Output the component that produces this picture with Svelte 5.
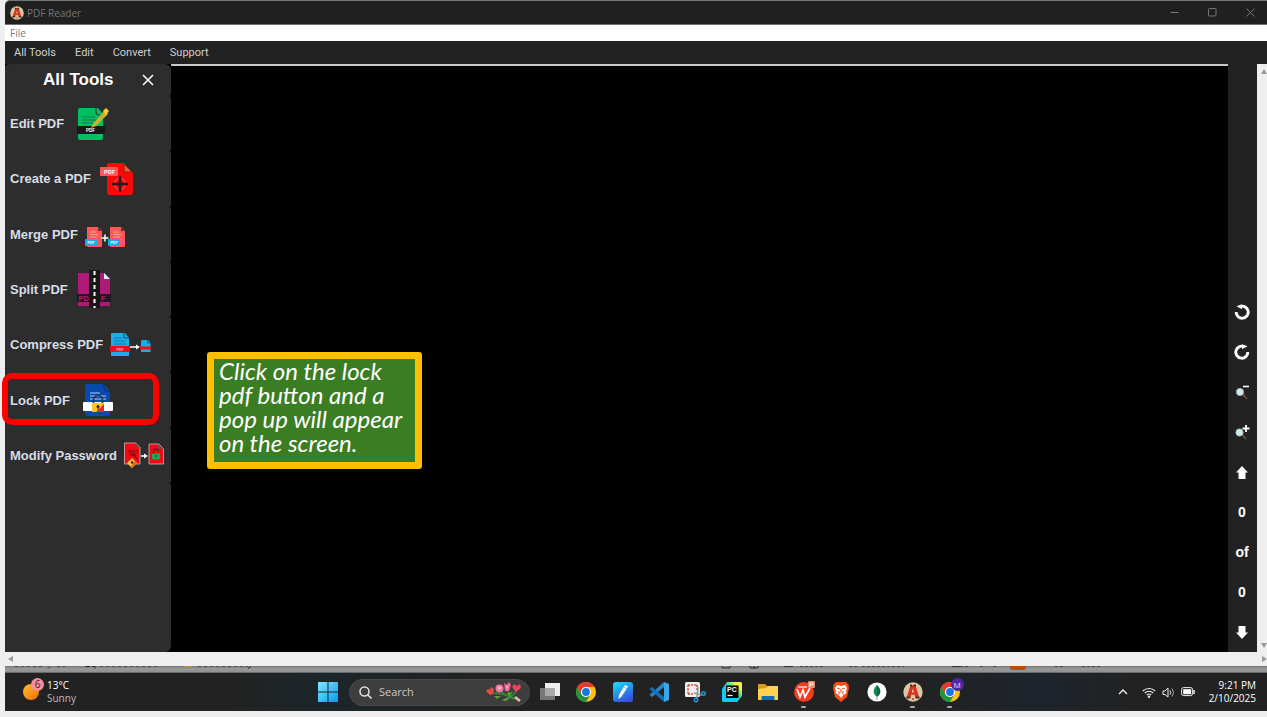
<script lang="ts">
  const menus = ['All Tools', 'Edit', 'Convert', 'Support'];
  const tools = [
    { id: 'edit', label: 'Edit PDF' },
    { id: 'create', label: 'Create a PDF' },
    { id: 'merge', label: 'Merge PDF' },
    { id: 'split', label: 'Split PDF' },
    { id: 'compress', label: 'Compress PDF' },
    { id: 'lock', label: 'Lock PDF' },
    { id: 'password', label: 'Modify Password' }
  ];
  const apps = [
    { id: 'tasks', name: 'Task view' },
    { id: 'chrome', name: 'Chrome' },
    { id: 'pen', name: 'Journal' },
    { id: 'code', name: 'Code editor' },
    { id: 'snip', name: 'Snipping Tool' },
    { id: 'pycharm', name: 'PyCharm' },
    { id: 'files', name: 'File Explorer' },
    { id: 'wps', name: 'WPS Office', running: true },
    { id: 'brave', name: 'Brave' },
    { id: 'leaf', name: 'Compass' },
    { id: 'reader', name: 'PDF Reader', running: true },
    { id: 'profile', name: 'Chrome profile', running: true }
  ];
</script>

{#snippet logo(size: number)}
  <svg width={size} height={size} viewBox="0 0 20 20" aria-hidden="true">
    <circle cx="10" cy="10" r="9.7" fill="#d9c7a5" />
    <path d="M7.7 3h4.6l4 12.8h-4l-.8-3H8.3l-.8 3h-4z" fill="#d9331c" />
    <path d="M9.9 6.4 8.7 10.6h2.4z" fill="#e3c9a0" />
    <path d="M7 2.5h2v2H7zM11 2.5h2v2h-2zM3.2 14.8h4v1.6h-4zM12.6 14.8h4v1.6h-4z" fill="#3b2f2f" />
    <circle cx="10" cy="17" r="1" fill="#d9331c" />
  </svg>
{/snippet}

{#snippet chrome()}
  <circle cx="10" cy="10" r="10" fill="#fbc116" />
  <path d="M1.34 5A10 10 0 0 1 18.66 5H10a5 5 0 0 0-4.33 7.5z" fill="#e33b2e" />
  <path d="M1.34 5A10 10 0 0 0 10 20l4.33-7.5a5 5 0 0 1-8.66 0z" fill="#229342" />
  <circle cx="10" cy="10" r="5" fill="#fff" />
  <circle cx="10" cy="10" r="3.9" fill="#1a73e8" />
{/snippet}

{#snippet toolIcon(id: string)}
  {#if id === 'edit'}
    <svg class="i-edit" width="34" height="34" viewBox="0 0 34 34" aria-hidden="true">
      <path d="M3 1h18l5 6v24a2 2 0 0 1-2 2H3a2 2 0 0 1-2-2V3a2 2 0 0 1 2-2z" fill="#04bf62" />
      <path d="M19 1v4a3 3 0 0 0 3 3h4" fill="none" stroke="#1c5035" stroke-width="1.2" />
      <path d="M5 10h13M5 13h15M5 16h11" stroke="#12794a" stroke-width="1" />
      <path d="M0 19h28v8H0z" fill="#191919" />
      <path d="m16 17 11-13 4 3-12 12-5 2z" fill="#c7b42c" />
      <path d="m26 4 3-3 3 3-3 4z" fill="#ffd326" />
      <text x="9" y="25" class="tiny" fill="#fff" font-size="4.5">PDF</text>
    </svg>
  {:else if id === 'create'}
    <svg class="i-create" width="34" height="34" viewBox="0 0 34 34" aria-hidden="true">
      <path d="M9 1h15l9 10v20a2 2 0 0 1-2 2H9a2 2 0 0 1-2-2V3a2 2 0 0 1 2-2z" fill="#fb0808" />
      <path d="M24 2v8h8z" fill="#ee5a31" stroke="#6b2414" stroke-width=".8" />
      <rect x="0" y="5" width="18" height="9" rx="1" fill="#ff5757" />
      <text x="4" y="12" class="tiny" fill="#fff" font-size="5.5">PDF</text>
      <circle cx="20" cy="22" r="5.5" fill="none" stroke="#ff5757" stroke-width="1" />
      <path d="M20 15v14M13 22h14" stroke="#24191a" stroke-width="2.6" stroke-linecap="round" />
    </svg>
  {:else if id === 'merge'}
    <svg class="i-merge" width="42" height="22" viewBox="0 0 42 22" aria-hidden="true">
      {#each [0, 23] as x}
        <g transform="translate({x} 0)">
          <path d="M2 1h11l4 4v15a1 1 0 0 1-1 1H3a1 1 0 0 1-1-1z" fill="#ff5757" />
          <path d="M13 1v4h4z" fill="#633" />
          <path d="M5 6h6M5 8.500h8M5 11h7" stroke="#ff9c96" stroke-width="1" />
          <rect x="0" y="13" width="12" height="7" rx="1" fill="#1cabe2" />
          <text x="2.500" y="18" class="tiny" fill="#fff" font-size="3.5">PDF</text>
        </g>
      {/each}
      <path d="M20 8.500v7M16.500 12h7" stroke="#fff" stroke-width="1.500" />
    </svg>
  {:else if id === 'split'}
    <svg class="i-split" width="34" height="38" viewBox="0 0 34 38" aria-hidden="true">
      <path d="M1 3h27l5 6v27H1z" fill="#ad1a78" />
      <path d="M27 3v6h6z" fill="#d9edf5" />
      <path d="M0 24h34v8H0z" fill="#201a1f" />
      <path d="M12 0h11v38H12z" fill="#171717" />
      <path d="M17.500 1v37" stroke="#fff" stroke-width="2" stroke-dasharray="4 3" />
      <text x="1.500" y="31" class="thin" fill="#ad1a78" font-size="7.500">PD</text>
      <text x="24" y="31" class="thin" fill="#ad1a78" font-size="7.500">F</text>
    </svg>
  {:else if id === 'compress'}
    <svg class="i-compress" width="42" height="24" viewBox="0 0 42 24" aria-hidden="true">
      <path d="M2 0h13l4 5v18H2a1 1 0 0 1-1-1V1a1 1 0 0 1 1-1z" fill="#1cace6" />
      <path d="M14 0v5h5" fill="none" stroke="#174e69" />
      <path d="M4 5h8M4 8h12M4 11h12" stroke="#0a6fa0" stroke-width=".8" />
      <rect x="0" y="13" width="20" height="6" rx="1" fill="#ef0e13" />
      <text x="6.500" y="17.500" class="tiny" fill="#fbb" font-size="3.5">PDF</text>
      <path d="M20 14h7" stroke="#fff" stroke-width="1.500" />
      <path d="m26 11.500 4 2.500-4 2.500z" fill="#fff" />
      <path d="M32 7h6l2.500 3v9H31V8z" fill="#1cace6" />
      <path d="M37.500 7v3h3" stroke="#174e69" fill="none" stroke-width=".8" />
      <path d="M30 13.500h11v3H30z" fill="#ef0e13" />
    </svg>
  {:else if id === 'lock'}
    <svg class="i-lock" width="30" height="34" viewBox="0 0 30 34" aria-hidden="true">
      <path d="M4 1h17l6 7v23a2 2 0 0 1-2 2H4a2 2 0 0 1-2-2V3a2 2 0 0 1 2-2z" fill="#0749ac" />
      <path d="M21 1v4a3 3 0 0 0 3 3h3" fill="none" stroke="#12284d" />
      <path d="M7 10h10M7 13h16M7 16h16" stroke="#b3cdf6" stroke-width="1" />
      <rect y="19" width="30" height="9" rx="1" fill="#fff" />
      <path d="M10.500 20v-3a4.500 4.500 0 0 1 9 0v3" fill="none" stroke="#28313f" stroke-width="1.600" />
      <rect x="9" y="20" width="12" height="9" fill="#fdc52b" />
      <path d="M21 21v8h-8z" fill="#e22c20" />
      <circle cx="15" cy="23.500" r="1.500" fill="#3b2a18" />
      <path d="M14.500 24h1v3h-1z" fill="#3b2a18" />
    </svg>
  {:else}
    <svg class="i-password" width="40" height="26" viewBox="0 0 40 26" aria-hidden="true">
      <path d="M.5 1H12l4 4v17H.5z" fill="#f50713" stroke="#c6b9b9" stroke-width=".8" />
      <path d="M12 1v4h4z" fill="#7b4547" />
      <text x="4" y="12" class="tiny" fill="#811" font-size="5">PDF</text>
      <path d="M5 13h7M9 12l4 5" stroke="#611" stroke-width="1.200" />
      <path d="m8 16 5 5-5 5-5-5z" fill="#ffc530" />
      <path d="m10.500 18.500 2.500 2.500-5 5-1-1z" fill="#ee661f" />
      <circle cx="8" cy="20.500" r="1.200" fill="#322" />
      <path d="M17 14h4" stroke="#fff" stroke-width="1.500" />
      <path d="m20 11.500 4 2.500-4 2.500z" fill="#fff" />
      <path d="M25 2h10l4.500 5v15H25z" fill="#f50713" stroke="#c6b9b9" stroke-width=".8" />
      <path d="M34 2v5h5z" fill="#7b4547" />
      <path d="M29.500 12V9.500a2.500 2.500 0 0 1 5 0" fill="none" stroke="#35331d" stroke-width="1.200" />
      <rect x="28" y="11.500" width="8" height="6" rx="1" fill="#0fb255" />
      <circle cx="32" cy="14" r="1" fill="#174f2d" />
    </svg>
  {/if}
{/snippet}

{#snippet appIcon(id: string)}
  <svg class="glyph" width="22" height="22" viewBox="-1 -1 22 22" aria-hidden="true">
    {#if id === 'tasks'}
      <path d="M5 1h15v13H5z" fill="#ededed" />
      <path d="M0 6h15v12H0z" fill="#777" />
      <path d="M5 6h10v8H5z" fill="#aaa" />
    {:else if id === 'chrome'}
      {@render chrome()}
    {:else if id === 'pen'}
      <defs><linearGradient id="pen-bg" x1="0" y1="0" x2=".5" y2="1"><stop stop-color="#16e4fa" /><stop offset="1" stop-color="#3454dd" /></linearGradient></defs>
      <rect width="20" height="20" rx="3" fill="url(#pen-bg)" />
      <path d="m12 3 3 1.500-6.500 10L5.500 17l.3-4z" fill="#fff" />
      <path d="m11 5 3 2" stroke="#39a5ec" stroke-width=".7" />
    {:else if id === 'code'}
      <path d="M15 0v5L3 15l-2.500-2L15 0z" fill="#2489ca" />
      <path d="M15 20v-5L3 5 .5 7 15 20z" fill="#1070b3" />
      <path d="m15 0 5 2v16l-5 2z" fill="#3ba7eb" />
    {:else if id === 'snip'}
      <rect x="0" y="0" width="15" height="15" rx="1.500" fill="#eee" />
      <path d="M3 3h9M3 3v9M12 3v5M3 12h5" stroke="#d44a35" stroke-width="1.500" stroke-dasharray="2 1.200" fill="none" />
      <path d="m13 5-1 11M9 11l8 2" stroke="#8b9aa5" stroke-width="1.700" />
      <circle cx="11" cy="18" r="1.800" fill="none" stroke="#2497d3" stroke-width="1.400" />
      <circle cx="18.500" cy="11.500" r="1.800" fill="none" stroke="#2497d3" stroke-width="1.400" />
    {:else if id === 'pycharm'}
      <defs><linearGradient id="py-bg" x1="0" y1="1" x2="1" y2="0"><stop offset=".45" stop-color="#12cdf0" /><stop offset=".6" stop-color="#3ddc9a" /><stop offset=".8" stop-color="#f2f046" /></linearGradient></defs>
      <path d="M5 0h14l1 1v13l-5 6H1l-1-1V7z" fill="url(#py-bg)" />
      <path d="M4 3.500h12.500V16H4z" fill="#080808" />
      <text x="5" y="10" class="tiny" fill="#fff" font-size="7">PC</text>
      <path d="M5.500 13.500h5" stroke="#fff" stroke-width="1.200" />
    {:else if id === 'files'}
      <path d="M0 2h7l2 2h11v14H0z" fill="#d69b18" />
      <path d="M0 7 8 6l2-2h10v14H0z" fill="#ffd250" />
      <path d="M3.500 18v-3a1 1 0 0 1 1-1h11a1 1 0 0 1 1 1v3z" fill="#0b70b8" />
    {:else if id === 'wps'}
      <circle cx="10" cy="10" r="10" fill="#f53b24" />
      <path d="m3 7 3 8 3-7 2 7 5-9" fill="none" stroke="#fff" stroke-width="1.700" />
      <path d="M4 5h9" stroke="#fff" stroke-width="1.200" />
      <rect x="14" y="-1" width="7" height="7" rx="1" fill="#e78b70" />
      <path d="M16 5V1h3v2h-3" stroke="#fff" fill="none" stroke-width=".8" />
    {:else if id === 'brave'}
      <path d="m5 0-3 3 .5 1L2 6l2 9 6 5 6-5 2-9-.5-2 .5-1-3-3z" fill="#fa4b19" />
      <path d="m6 3 4 1 4-1 2 3-1 3 .500 2-3 2-2.500 3-2.500-3-3-2L5 9 4 6z" fill="#fff" />
      <path d="m6 6 3 1M14 6l-3 1M10 7v4M7.500 9l1 2-1 1.500M12.500 9l-1 2 1 1.500" stroke="#fa4b19" stroke-width="1" fill="none" />
    {:else if id === 'leaf'}
      <circle cx="10" cy="10" r="9.600" fill="#fff" />
      <path d="M10 3c-5 5-4 9 0 12z" fill="#168a51" />
      <path d="M10 3c5 5 4 9 0 12z" fill="#116348" />
      <path d="M10 14v4" stroke="#8d9f92" stroke-width="1" />
    {:else if id === 'reader'}
      {@render logo(20)}
    {:else}
      {@render chrome()}
    {/if}
  </svg>
  {#if id === 'profile'}<span class="badge m">M</span>{/if}
{/snippet}

<div class="screen">
  <header class="titlebar">
    {@render logo(14)}
    <span class="title">PDF Reader</span>
    <div class="window-buttons">
      <button aria-label="Minimize"><svg width="9" height="9" viewBox="0 0 9 9"><path d="M.5 4.500h8" /></svg></button>
      <button aria-label="Maximize"><svg width="9" height="9" viewBox="0 0 9 9"><rect x=".5" y=".5" width="7.500" height="7.500" rx="1" /></svg></button>
      <button aria-label="Close"><svg width="9" height="9" viewBox="0 0 9 9"><path d="m.5.5 8 8m0-8-8 8" /></svg></button>
    </div>
  </header>

  <div class="filebar"><button>File</button></div>

  <nav class="toolbar">
    {#each menus as menu}<button>{menu}</button>{/each}
  </nav>

  <main>
    <aside class="sidebar">
      <div class="side-head">
        <h1>All Tools</h1>
        <button aria-label="Close tools"><svg width="12" height="12" viewBox="0 0 12 12"><path d="m1 1 10 10M11 1 1 11" stroke="#fff" stroke-width="1.500" /></svg></button>
      </div>
      <div class="tools">
        {#each tools as tool}
          <button class="tool {tool.id}">
            <span>{tool.label}</span>
            {@render toolIcon(tool.id)}
          </button>
        {/each}
      </div>
      <div class="side-rest"></div>
    </aside>

    <section class="canvas">
      <p class="note">Click on the lock<br />pdf button and a<br />pop up will appear<br />on the screen.</p>
    </section>

    <aside class="pager">
      <button aria-label="Rotate left"><svg width="16" height="16" viewBox="0 0 16 16"><path d="M6 2.600A6 6 0 1 1 2.200 8" fill="none" stroke="#fff" stroke-width="2.900" /><path d="M2.500 2.200 8 .300v5z" fill="#fff" /></svg></button>
      <button aria-label="Rotate right"><svg width="16" height="16" viewBox="0 0 16 16"><path d="M10 2.600A6 6 0 1 0 13.800 8" fill="none" stroke="#fff" stroke-width="2.900" /><path d="M13.500 2.200 8 .300v5z" fill="#fff" /></svg></button>
      <button aria-label="Zoom out"><svg width="16" height="16" viewBox="0 0 16 16"><path d="m8 9 5 6" stroke="#76503d" stroke-width="1.500" /><circle cx="6" cy="8" r="3.700" fill="#d3e8e6" stroke="#8fa3a2" stroke-width=".6" /><path d="M9 2.500h6" stroke="#fff" stroke-width="1.600" /></svg></button>
      <button aria-label="Zoom in"><svg width="16" height="16" viewBox="0 0 16 16"><path d="m7 9 5 6" stroke="#76503d" stroke-width="1.500" /><circle cx="5.500" cy="8.500" r="3.700" fill="#d3e8e6" stroke="#8fa3a2" stroke-width=".6" /><path d="M8.500 4.500h7M12 1v7" stroke="#fff" stroke-width="1.800" /></svg></button>
      <button aria-label="Previous page"><svg width="12" height="13" viewBox="0 0 12 13"><path d="m6 0 6 6.500H9.500V13h-7V6.500H0z" fill="#fff" /></svg></button>
      <span>0</span>
      <span>of</span>
      <span>0</span>
      <button aria-label="Next page"><svg width="12" height="13" viewBox="0 0 12 13"><path d="m6 13 6-6.500H9.500V0h-7v6.500H0z" fill="#fff" /></svg></button>
    </aside>

    <div class="vscroll">
      <svg width="6" height="5" viewBox="0 0 6 5"><path d="m3 0 3 5H0z" /></svg>
      <svg width="6" height="5" viewBox="0 0 6 5"><path d="m3 5 3-5H0z" /></svg>
    </div>
  </main>

  <div class="hscroll">
    <svg width="5" height="6" viewBox="0 0 5 6"><path d="m0 3 5-3v6z" /></svg>
    <svg width="5" height="6" viewBox="0 0 5 6"><path d="m5 3-5-3v6z" /></svg>
  </div>

  <div class="behind">
    <svg width="250" height="3" viewBox="0 0 250 3" aria-hidden="true">
      <path d="M10 .5h30M52 .5h8M95 .5h58M193 .5h50" stroke="#4b4b4b" stroke-dasharray="3 3" />
      <path d="M80 .5h5m2 0h3v2m-45-2-2 2m203-2-3 2" stroke="#282828" fill="none" /><path d="M179 .5h8" stroke="#c48b35" />
    </svg>
    <svg width="550" height="4" viewBox="0 0 550 4" aria-hidden="true">
      <path d="M5 0v2h8V0M33 0v2h8V0m-4 0v3M67 .500h9M235 .5h10" stroke="#303030" fill="none" />
      <path d="M83 .5h24M132 .5h8m5 0h42M243 .5h10m10 0h5m8 0h3M338 .5h10M365 .5h20" stroke="#444" stroke-dasharray="3 2" />
      <path d="M293 0h16v2a2 2 0 0 1-2 2h-12a2 2 0 0 1-2-2z" fill="#b8500d" />
    </svg>
  </div>

  <footer class="taskbar">
    <div class="weather">
      <div class="sun"><span class="badge six">6</span></div>
      <div class="forecast"><span>13°C</span><span class="dim">Sunny</span></div>
    </div>

    <div class="center">
      <button class="start" aria-label="Start">
        <svg width="20" height="20" viewBox="0 0 20 20"><defs><linearGradient id="win" gradientUnits="userSpaceOnUse" x1="0" y1="0" x2="20" y2="20"><stop stop-color="#7beafc" /><stop offset="1" stop-color="#0c96ee" /></linearGradient></defs><path d="M0 0h9.500v9.500H0zM10.500 0H20v9.500h-9.500zM0 10.500h9.500V20H0zM10.500 10.500H20V20h-9.500z" fill="url(#win)" /></svg>
      </button>
      <label class="search">
        <svg width="13" height="13" viewBox="0 0 13 13" aria-hidden="true"><circle cx="5.500" cy="5.500" r="4.500" fill="none" stroke="#ddd" stroke-width="1.600" /><path d="m9 9 3.500 3.500" stroke="#ddd" stroke-width="1.600" /></svg>
        <input type="text" placeholder="Search" aria-label="Search" />
        <svg width="36" height="20" viewBox="0 0 36 20" aria-hidden="true">
          <path d="M6 11q13 0 26 7M14 8q5 6 14 9M21 8q2 5 7 9M30 8q-2 7-13 10" fill="none" stroke="#2f8b3c" stroke-width="1.400" />
          <path d="M8 14h7l-4 3zM21 11l6-1-4 4zM16 18l10-4-6 5z" fill="#60a331" />
          <path d="m29 15 5 4" stroke="#e8c39b" stroke-width="2.500" />
          <path d="M4 13 0 9l2-2 2 1 1-3 3 2-1 5z" fill="#ee4a45" />
          <circle cx="13.500" cy="6.500" r="4" fill="#f178a4" /><circle cx="13.500" cy="6" r="1.500" fill="#ffc0d4" />
          <path d="m18 1 2.500 2L23 0l2 3-2 6h-4z" fill="#f35f91" /><path d="m20 3 2 1-1 4z" fill="#ffc1d1" />
          <path d="m30 10-4-5 2-3 3 2 3-2 1 4z" fill="#f1435a" />
        </svg>
      </label>
      <div class="apps">
        {#each apps as app}
          <button class="app" class:running={app.running} aria-label={app.name}>{@render appIcon(app.id)}</button>
        {/each}
      </div>
    </div>

    <div class="tray">
      <svg width="10" height="6" viewBox="0 0 10 6" aria-hidden="true"><path d="m1 5 4-4 4 4" fill="none" stroke="#eee" stroke-width="1.400" /></svg>
      <div class="status">
        <svg width="14" height="11" viewBox="0 0 14 11" aria-hidden="true"><path d="M.8 4a9 9 0 0 1 12.400 0M2.800 6a6 6 0 0 1 8.400 0M4.800 8a3.200 3.200 0 0 1 4.400 0" fill="none" stroke="#eee" stroke-width="1.100" /><circle cx="7" cy="9.700" r="1.200" fill="#eee" /></svg>
        <svg width="13" height="11" viewBox="0 0 13 11" aria-hidden="true"><path d="M1 4h2l3-3v9L3 7.500H1z" fill="none" stroke="#eee" /><path d="M8 3.500q1.500 2 0 4" fill="none" stroke="#eee" /><path d="M10 1.500q3 4 0 8" fill="none" stroke="#aaa" /></svg>
        <svg width="14" height="10" viewBox="0 0 14 10" aria-hidden="true"><rect x=".6" y=".6" width="11" height="8" rx="2" fill="none" stroke="#eee" /><rect x="2.200" y="2.200" width="8" height="5" fill="#fff" /><path d="M13 3v4" stroke="#eee" stroke-width="1.500" /></svg>
      </div>
      <div class="clock"><span>9:21 PM</span><span>2/10/2025</span></div>
    </div>
  </footer>
</div>

<style>
  :global(body) { margin: 0; background: #eee; }
  .screen {
    box-sizing: border-box;
    min-height: 100vh;
    padding: 0 0 6px 5px;
    display: flex;
    flex-direction: column;
    font-family: "Open Sans", "Noto Sans", sans-serif;
    color: #fff;
  }
  button { border: 0; padding: 0; margin: 0; background: none; color: inherit; font: inherit; cursor: pointer; }
  svg { display: block; flex: none; }
  .tiny { font-family: "Liberation Sans", sans-serif; font-weight: bold; }
  .thin { font-family: "Liberation Sans", sans-serif; }

  .titlebar {
    box-sizing: border-box;
    height: 25px;
    display: flex;
    align-items: center;
    gap: 3px;
    padding: 0 12px 0 5px;
    border-top: 1px solid #747675;
    border-bottom: 1px solid #6f6f6f;
    border-radius: 5px 0 0 0;
    background: #202020;
  }
  .title { flex: 1; font: 10px/14px "Open Sans", sans-serif; color: #777; }
  .window-buttons { display: flex; gap: 29px; }
  .window-buttons svg { fill: none; stroke: #777; }
  .filebar { box-sizing: border-box; height: 16px; padding-left: 5px; background: #fff; color: #777; font: 10px/16px "Open Sans", sans-serif; }
  .filebar button { display: block; }
  .toolbar {
    box-sizing: border-box;
    height: 23px;
    display: flex;
    align-items: center;
    gap: 19px;
    padding-left: 9px;
    background: #222;
    color: #d0d0d0;
    font: 11px/14px Roboto, sans-serif;
  }

  main { flex: 1; display: flex; min-height: 588px; background: #000; }
  .sidebar { width: 166px; display: flex; flex-direction: column; font-family: "Liberation Sans", sans-serif; }
  .side-head { height: 32px; display: flex; align-items: center; gap: 28px; padding-left: 38px; background: #2d2d2d; border-radius: 4px 6px 2px 0; }
  h1 { margin: 0; font-size: 17px; line-height: 20px; }
  .tools { height: 387px; display: grid; grid-template-rows: repeat(7, 1fr); }
  .tool {
    position: relative;
    display: flex;
    align-items: center;
    padding-left: 5px;
    background: #2d2d2d;
    border-radius: 0 2px 2px 0;
    color: #d7dde6;
    font-size: 13px;
    font-weight: bold;
    white-space: nowrap;
  }
  .tool svg { margin-left: 9px; }
  .tool .i-edit, .tool .i-lock { margin-left: 13px; }
  .tool .i-merge, .tool .i-compress, .tool .i-password { margin-left: 7px; }
  .tool .i-merge { margin-top: 5px; }
  .lock::after {
    content: "";
    position: absolute;
    inset: 1px 12px 3px -3px;
    border: 6px solid #f00;
    border-radius: 10px;
  }
  .side-rest { flex: 1; background: #2d2d2d; border-radius: 0 2px 6px 0; }

  .canvas { position: relative; flex: 1; border-top: 2px solid #c9c9c9; }
  .note {
    position: absolute;
    left: 36px;
    top: 286px;
    box-sizing: border-box;
    width: 215px;
    height: 117px;
    margin: 0;
    padding: 0 0 0 5px;
    border: 7px solid #ffc000;
    border-radius: 3px;
    background: #3b7d23;
    font: italic 24px/24px "Segoe Print", "Ink Free", Lato, sans-serif;
    white-space: nowrap;
  }
  .pager {
    box-sizing: border-box;
    width: 29px;
    padding-right: 1px;
    display: grid;
    grid-auto-rows: 40px;
    align-content: end;
    justify-items: center;
    align-items: center;
    background: #222;
    font: bold 14px/16px "Liberation Sans", sans-serif;
  }
  .vscroll { box-sizing: border-box; width: 10px; padding: 5px 0 4px 4px; display: flex; flex-direction: column; justify-content: space-between; background: #efefef; }
  .vscroll svg, .hscroll svg { fill: #999; }
  .hscroll { box-sizing: border-box; height: 14px; padding: 0 0 0 3px; display: flex; align-items: center; justify-content: space-between; background: #efefef; border-radius: 0 0 0 5px; }
  .behind { height: 7px; display: flex; justify-content: space-between; background: linear-gradient(#777, #999 40%, #929292 80%, #555); }

  .taskbar {
    height: 38px;
    display: grid;
    grid-template-columns: 1fr auto 1fr;
    align-items: center;
    background: linear-gradient(90deg, #222 18%, #1b262a 25%, #222 40%, #222 72%, #1d242c 82%, #222 90%);
    font-size: 10px;
    line-height: 13px;
  }
  .weather { display: flex; align-items: center; gap: 8px; padding-left: 18px; }
  .sun { position: relative; width: 16px; height: 16px; border-radius: 50%; background: linear-gradient(135deg, #ffc12a, #f26a0b); }
  .badge { position: absolute; width: 13px; height: 13px; border-radius: 50%; text-align: center; line-height: 13px; }
  .six { left: 8px; top: -6px; background: #f78e9d; color: #402024; }
  .m { left: 19px; top: 5px; background: #5127a4; color: #e9dcff; font-size: 8px; }
  .forecast, .clock { display: flex; flex-direction: column; }
  .dim { color: #bbb; }
  .center { display: flex; align-items: center; padding-left: 9px; }
  .start { width: 30px; display: flex; justify-content: center; }
  .search {
    box-sizing: border-box;
    width: 181px;
    height: 27px;
    margin: 0 2px 0 6px;
    padding: 0 7px 0 9px;
    display: flex;
    align-items: center;
    gap: 7px;
    border: 1px solid #4b4b4b;
    border-radius: 14px;
    background: #3e3e3e;
  }
  input { flex: 1; min-width: 0; padding: 0; border: 0; outline: 0; background: none; color: #ddd; font: 11px/16px "Open Sans", sans-serif; }
  input::placeholder { color: #c8c8c8; opacity: 1; }
  .apps { width: 436px; display: grid; grid-template-columns: repeat(12, 1fr); }
  .app { position: relative; height: 38px; display: flex; align-items: center; justify-content: center; }
  .running::after { content: ""; position: absolute; left: calc(50% - 3px); bottom: 3px; width: 5px; height: 2px; border-radius: 1px; background: #aaa; }
  .tray { display: flex; align-items: center; justify-content: flex-end; gap: 14px; padding-right: 11px; }
  .status { display: flex; align-items: center; gap: 6px; }
  .clock { text-align: right; }
</style>
